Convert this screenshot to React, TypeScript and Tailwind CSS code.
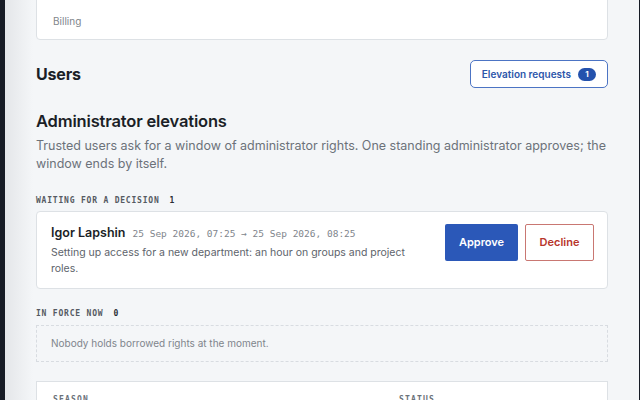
export default function App() {
  return (
    <div className="flex h-[400px] w-[640px] overflow-hidden bg-[#161b25] font-['Inter',sans-serif] text-[#1b1f27]">
      {/* Drawer panel */}
      <div className="relative ml-[5px] mr-px flex-1 overflow-hidden bg-[#f4f6f8]">
        <div className="pointer-events-none absolute inset-y-0 left-0 w-[28px] bg-gradient-to-r from-[#e4e6e9] to-transparent" />
        <div className="relative pl-[31px] pr-[31px]">
          {/* Tail of previous card */}
          <div className="-mt-px flex h-[41px] items-end rounded-b-sm border border-[#dde1e5] bg-white px-[16px] pb-[10px]">
            <span className="text-[10px] text-[#80858c]">Billing</span>
          </div>

          {/* Users header */}
          <div className="mt-[20px] flex items-center justify-between">
            <h2 className="text-[16px] font-bold tracking-[-0.01em]">Users</h2>
            <button className="flex h-[28px] items-center gap-[7px] rounded-[5px] border border-[#4c74c4] bg-white px-[11px] text-[10px] font-semibold text-[#2c56aa]">
              Elevation requests
              <span className="flex h-[13px] min-w-[18px] items-center justify-center rounded-full bg-[#2452ad] px-[5px] text-[8px] font-bold text-white">
                1
              </span>
            </button>
          </div>

          {/* Admin elevations */}
          <h3 className="mt-[23px] text-[16.5px] font-semibold leading-[20px] tracking-[-0.01em]">Administrator elevations</h3>
          <p className="mt-[6px] text-[12.5px] leading-[18px] text-[#6c727a]">
            Trusted users ask for a window of administrator rights. One standing administrator approves; the window ends by itself.
          </p>

          <div className="mt-[22px] flex items-center gap-[10px] font-['DejaVu_Sans_Mono',monospace] text-[8px] font-bold uppercase tracking-[0.1em] text-[#555a62]">
            <span>Waiting for a decision</span>
            <span className="text-[#2a2e35]">1</span>
          </div>

          <div className="mt-[4px] flex items-start justify-between rounded-sm border border-[#dde1e5] bg-white pb-[11px] pt-[12px] pl-[14px] pr-[13px]">
            <div className="w-[370px]">
              <div className="flex items-baseline gap-[7px]">
                <span className="text-[12.5px] font-semibold">Igor Lapshin</span>
                <span className="font-['DejaVu_Sans_Mono',monospace] text-[9.5px] text-[#80858c]">
                  25 Sep 2026, 07:25 → 25 Sep 2026, 08:25
                </span>
              </div>
              <p className="mt-[2px] text-[10.5px] leading-[16px] text-[#5d636b]">
                Setting up access for a new department: an hour on groups and project roles.
              </p>
            </div>
            <div className="flex gap-[7px]">
              <button className="h-[37px] w-[73px] rounded-[2px] bg-[#2b58b8] text-[11px] font-semibold text-white">Approve</button>
              <button className="h-[37px] w-[69px] rounded-[2px] border border-[#c97772] bg-white text-[11px] font-semibold text-[#b7352c]">Decline</button>
            </div>
          </div>

          <div className="mt-[19px] flex items-center gap-[10px] font-['DejaVu_Sans_Mono',monospace] text-[8px] font-bold uppercase tracking-[0.1em] text-[#555a62]">
            <span>In force now</span>
            <span className="text-[#2a2e35]">0</span>
          </div>

          <div className="mt-[5px] flex h-[37px] items-center border border-dashed border-[#d8dce1] px-[14px]">
            <span className="text-[10px] text-[#80858c]">Nobody holds borrowed rights at the moment.</span>
          </div>

          {/* Next table card */}
          <div className="mt-[19px] h-[60px] border border-[#dde1e5] bg-white">
            <div className="grid grid-cols-[346px_1fr] px-[16px] pt-[12px] font-['DejaVu_Sans_Mono',monospace] text-[8px] font-bold uppercase tracking-[0.15em] text-[#6c727a]">
              <span>Season</span>
              <span>Status</span>
            </div>
          </div>
        </div>
      </div>
    </div>
  )
}
